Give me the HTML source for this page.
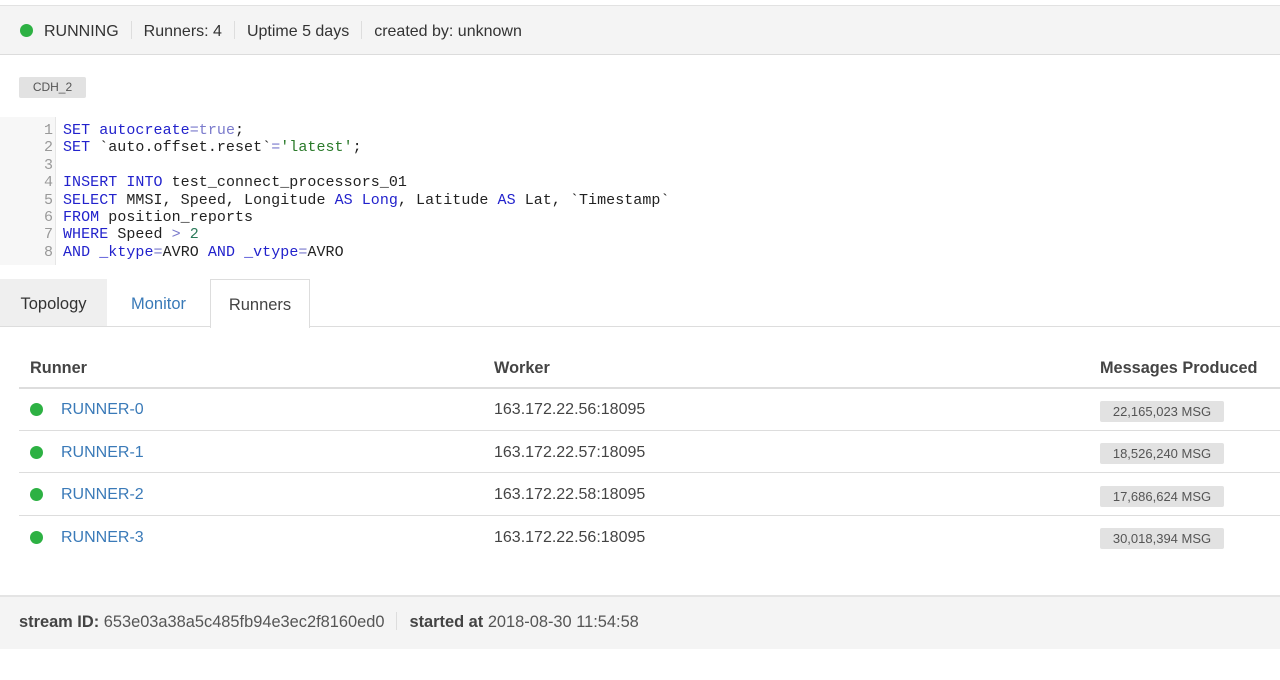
<!DOCTYPE html>
<html><head><style>
body{margin:0;width:1280px;height:680px;background:#fff;font-family:"Liberation Sans",sans-serif;position:relative;overflow:hidden;color:#333}
.a{position:absolute}
.top{left:0;top:5px;width:1280px;height:48px;background:#f4f4f4;border-top:1px solid #e2e2e2;border-bottom:1px solid #dcdcdc}
.st{font-size:16px;color:#333;top:21px;left:44px;white-space:nowrap}
.sep{display:inline-block;width:1px;height:18px;background:#ddd;vertical-align:-3px;margin:0 12px}
.dot{width:13px;height:13px;border-radius:50%;background:#2db143}
.badge{left:19px;top:77px;width:67px;height:21px;background:#e2e2e2;border-radius:2px;font-size:12px;color:#555;text-align:center;line-height:21px}
.gut{left:0;top:117px;width:55px;height:148px;background:#f7f7f7;border-right:1px solid #e6e6e6}
.code{left:0;top:122px;font-family:"Liberation Mono",monospace;font-size:15px;letter-spacing:0.05px;line-height:17.4px;white-space:pre;color:#222}
.ln{display:inline-block;width:63px;text-align:right;color:#999;padding-right:10px;box-sizing:border-box;letter-spacing:0}
.k{color:#2222cc}.o{color:#7a7acc}.s{color:#2a7a2a}.n{color:#2a7a5a}
.tabline{left:0;top:326px;width:1280px;height:1px;background:#ddd}
.tab{top:279px;height:47px;font-size:16.5px;line-height:50px;text-align:center}
.th{top:359px;font-size:16.3px;font-weight:bold;color:#444}
.hr{left:19px;width:1261px;height:1px;background:#ddd}
.cell{font-size:16px;color:#444}
.run{font-size:16px;color:#3a7ab8}
.msg{width:124px;height:21px;background:#e2e2e2;border-radius:2px;font-size:13px;color:#555;text-align:center;line-height:21px;left:1100px}
.foot{left:0;top:595px;width:1280px;height:52px;background:#f4f4f4;border-top:2px solid #e4e4e4}
</style></head><body>
<div class="a top"></div>
<div class="a dot" style="left:20px;top:24px"></div>
<div class="a st">RUNNING<span class="sep"></span>Runners: 4<span class="sep"></span>Uptime 5 days<span class="sep"></span>created by: unknown</div>
<div class="a badge">CDH_2</div>
<div class="a gut"></div>
<div class="a code"><span class="ln">1</span><span class="k">SET</span> <span class="k">autocreate</span><span class="o">=true</span>;
<span class="ln">2</span><span class="k">SET</span> `auto.offset.reset`<span class="o">=</span><span class="s">'latest'</span>;
<span class="ln">3</span>
<span class="ln">4</span><span class="k">INSERT INTO</span> test_connect_processors_01
<span class="ln">5</span><span class="k">SELECT</span> MMSI, Speed, Longitude <span class="k">AS</span> <span class="k">Long</span>, Latitude <span class="k">AS</span> Lat, `Timestamp`
<span class="ln">6</span><span class="k">FROM</span> position_reports
<span class="ln">7</span><span class="k">WHERE</span> Speed <span class="o">&gt;</span> <span class="n">2</span>
<span class="ln">8</span><span class="k">AND</span> <span class="k">_ktype</span><span class="o">=</span>AVRO <span class="k">AND</span> <span class="k">_vtype</span><span class="o">=</span>AVRO</div>
<div class="a tabline"></div>
<div class="a tab" style="left:0;width:107px;background:#efefef;color:#333">Topology</div>
<div class="a tab" style="left:107px;width:103px;color:#3a7ab8">Monitor</div>
<div class="a tab" style="left:210px;width:98px;height:48px;background:#fff;border:1px solid #ddd;border-bottom:none;color:#444">Runners</div>
<div class="a th" style="left:30px">Runner</div>
<div class="a th" style="left:494px">Worker</div>
<div class="a th" style="left:1100px">Messages Produced</div>
<div class="a hr" style="top:387px;height:2px"></div>
<div class="a hr" style="top:430px"></div>
<div class="a hr" style="top:472px"></div>
<div class="a hr" style="top:515px"></div>

<div class="a dot" style="left:30px;top:403px"></div><div class="a run" style="left:61px;top:401px">RUNNER-0</div><div class="a cell" style="left:494px;top:401px">163.172.22.56:18095</div><div class="a msg" style="top:401px">22,165,023 MSG</div>
<div class="a dot" style="left:30px;top:446px"></div><div class="a run" style="left:61px;top:444px">RUNNER-1</div><div class="a cell" style="left:494px;top:444px">163.172.22.57:18095</div><div class="a msg" style="top:443px">18,526,240 MSG</div>
<div class="a dot" style="left:30px;top:488px"></div><div class="a run" style="left:61px;top:486px">RUNNER-2</div><div class="a cell" style="left:494px;top:486px">163.172.22.58:18095</div><div class="a msg" style="top:486px">17,686,624 MSG</div>
<div class="a dot" style="left:30px;top:531px"></div><div class="a run" style="left:61px;top:529px">RUNNER-3</div><div class="a cell" style="left:494px;top:529px">163.172.22.56:18095</div><div class="a msg" style="top:528px">30,018,394 MSG</div>

<div class="a foot"></div>
<div class="a" style="left:19px;top:612px;font-size:16.4px;color:#555;white-space:nowrap"><b style="color:#444">stream ID:</b> 653e03a38a5c485fb94e3ec2f8160ed0<span class="sep"></span><b style="color:#444">started at</b> 2018-08-30 11:54:58</div>
</body></html>
